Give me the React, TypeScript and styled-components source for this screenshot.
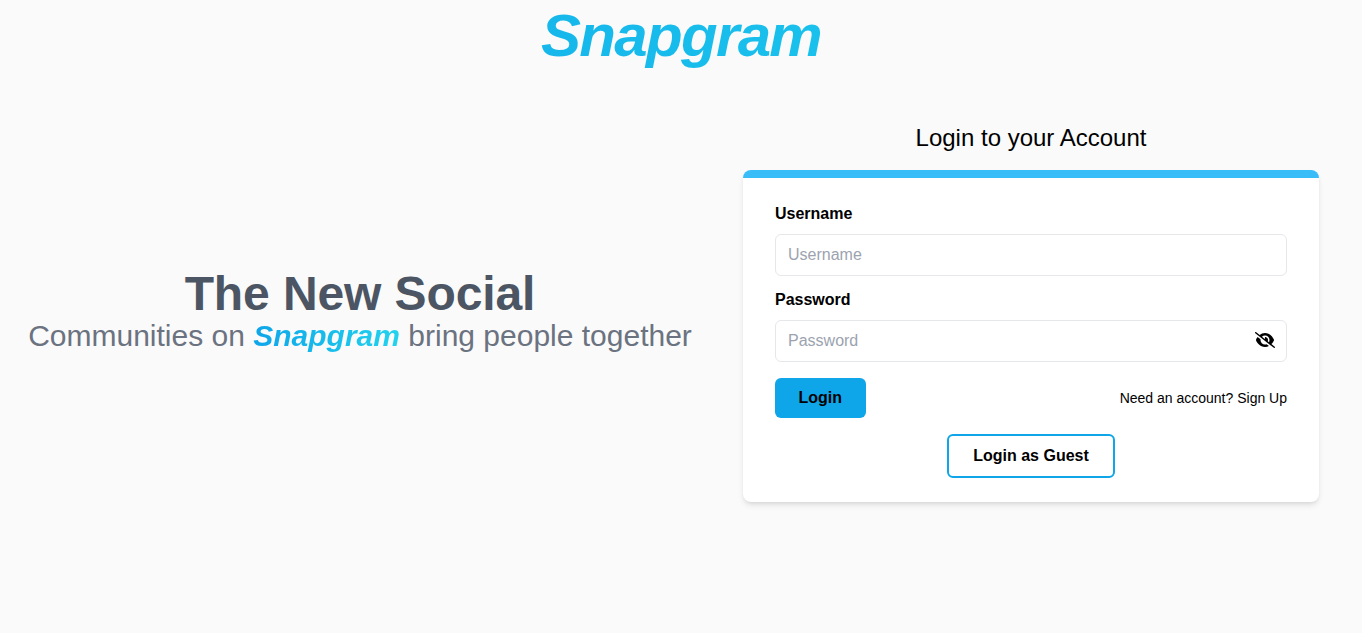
import React from "react";
import styled, { createGlobalStyle, css } from "styled-components";
import { FaEyeSlash } from "react-icons/fa6";

const GlobalStyle = createGlobalStyle`
  *, *::before, *::after { box-sizing: border-box; }
  body {
    margin: 0;
    background: #fafafa;
    color: #000;
    font-family: "Liberation Sans", Arial, sans-serif;
    font-size: 16px;
    line-height: 24px;
  }
  h1, h2, p { margin: 0; font-weight: 400; }
  input, button { font: inherit; color: inherit; }
`;

const gradientText = css`
  background-image: linear-gradient(to right, #0ea5e9, #22d3ee);
  background-clip: text;
  -webkit-background-clip: text;
  color: transparent;
  font-style: italic;
  font-weight: 700;
`;

const Page = styled.div`
  min-height: 633px;
  overflow: hidden;
`;

const Brand = styled.h1`
  ${gradientText}
  font-size: 60px;
  line-height: 72px;
  letter-spacing: -0.028em;
  text-align: center;
`;

const Columns = styled.main`
  display: grid;
  grid-template-columns: 720px 622px;
  align-items: center;
  margin-top: 50px;
  height: 380px;
`;

const Intro = styled.section`
  text-align: center;
`;

const Headline = styled.h2`
  font-size: 48px;
  line-height: 48px;
  font-weight: 700;
  letter-spacing: -0.1px;
  color: #4b5563;
`;

const Tagline = styled.p`
  font-size: 30px;
  line-height: 36px;
  color: #6b7280;
`;

const BrandWord = styled.span`
  ${gradientText}
`;

const LoginSection = styled.section`
  display: flex;
  flex-direction: column;
  align-items: center;
`;

const LoginTitle = styled.h2`
  font-size: 24px;
  line-height: 32px;
`;

const Card = styled.form`
  width: 576px;
  height: 332px;
  margin-top: 16px;
  padding: 24px 32px;
  border-top: 8px solid #38bdf8;
  border-radius: 8px;
  background: #fff;
  box-shadow: 0 4px 6px -1px rgba(0, 0, 0, 0.1), 0 2px 4px -2px rgba(0, 0, 0, 0.1);
`;

const Label = styled.label<{ $spaced?: boolean }>`
  display: block;
  margin-top: ${({ $spaced }) => ($spaced ? "12px" : "0")};
  font-weight: 600;
`;

const Field = styled.div`
  display: flex;
  align-items: center;
  height: 42px;
  margin-top: 8px;
  padding: 0 11px 0 12px;
  border: 1px solid #e5e7eb;
  border-radius: 6px;
`;

const Input = styled.input`
  flex: 1;
  min-width: 0;
  height: 24px;
  padding: 0;
  border: 0;
  outline: 0;
  background: transparent;
  &::placeholder { color: #9ca3af; opacity: 1; }
`;

const RevealIcon = styled(FaEyeSlash)`
  flex: none;
  margin-bottom: 2px;
  font-size: 20px;
`;

const Actions = styled.div`
  display: flex;
  align-items: center;
  justify-content: space-between;
  margin-top: 16px;
`;

const Button = styled.button<{ $outlined?: boolean }>`
  padding: ${({ $outlined }) => ($outlined ? "8px 24px" : "8px 23.5px")};
  border: ${({ $outlined }) => ($outlined ? "2px solid #0ea5e9" : "0")};
  border-radius: 6px;
  background: ${({ $outlined }) => ($outlined ? "#fff" : "#0ea5e9")};
  font-weight: 600;
  line-height: 24px;
`;

const SignUp = styled.span`
  font-size: 14px;
  line-height: 20px;
`;

const GuestRow = styled.div`
  display: flex;
  justify-content: center;
  margin-top: 16px;
`;

export default function App() {
  return (
    <Page>
      <GlobalStyle />
      <Brand>Snapgram</Brand>
      <Columns>
        <Intro>
          <Headline>The New Social</Headline>
          <Tagline>
            Communities on <BrandWord>Snapgram</BrandWord> bring people together
          </Tagline>
        </Intro>
        <LoginSection>
          <LoginTitle>Login to your Account</LoginTitle>
          <Card>
            <Label htmlFor="username">Username</Label>
            <Field>
              <Input id="username" placeholder="Username" />
            </Field>
            <Label htmlFor="password" $spaced>Password</Label>
            <Field>
              <Input id="password" type="password" placeholder="Password" />
              <RevealIcon />
            </Field>
            <Actions>
              <Button type="button">Login</Button>
              <SignUp>Need an account? Sign Up</SignUp>
            </Actions>
            <GuestRow>
              <Button type="button" $outlined>Login as Guest</Button>
            </GuestRow>
          </Card>
        </LoginSection>
      </Columns>
    </Page>
  );
}
